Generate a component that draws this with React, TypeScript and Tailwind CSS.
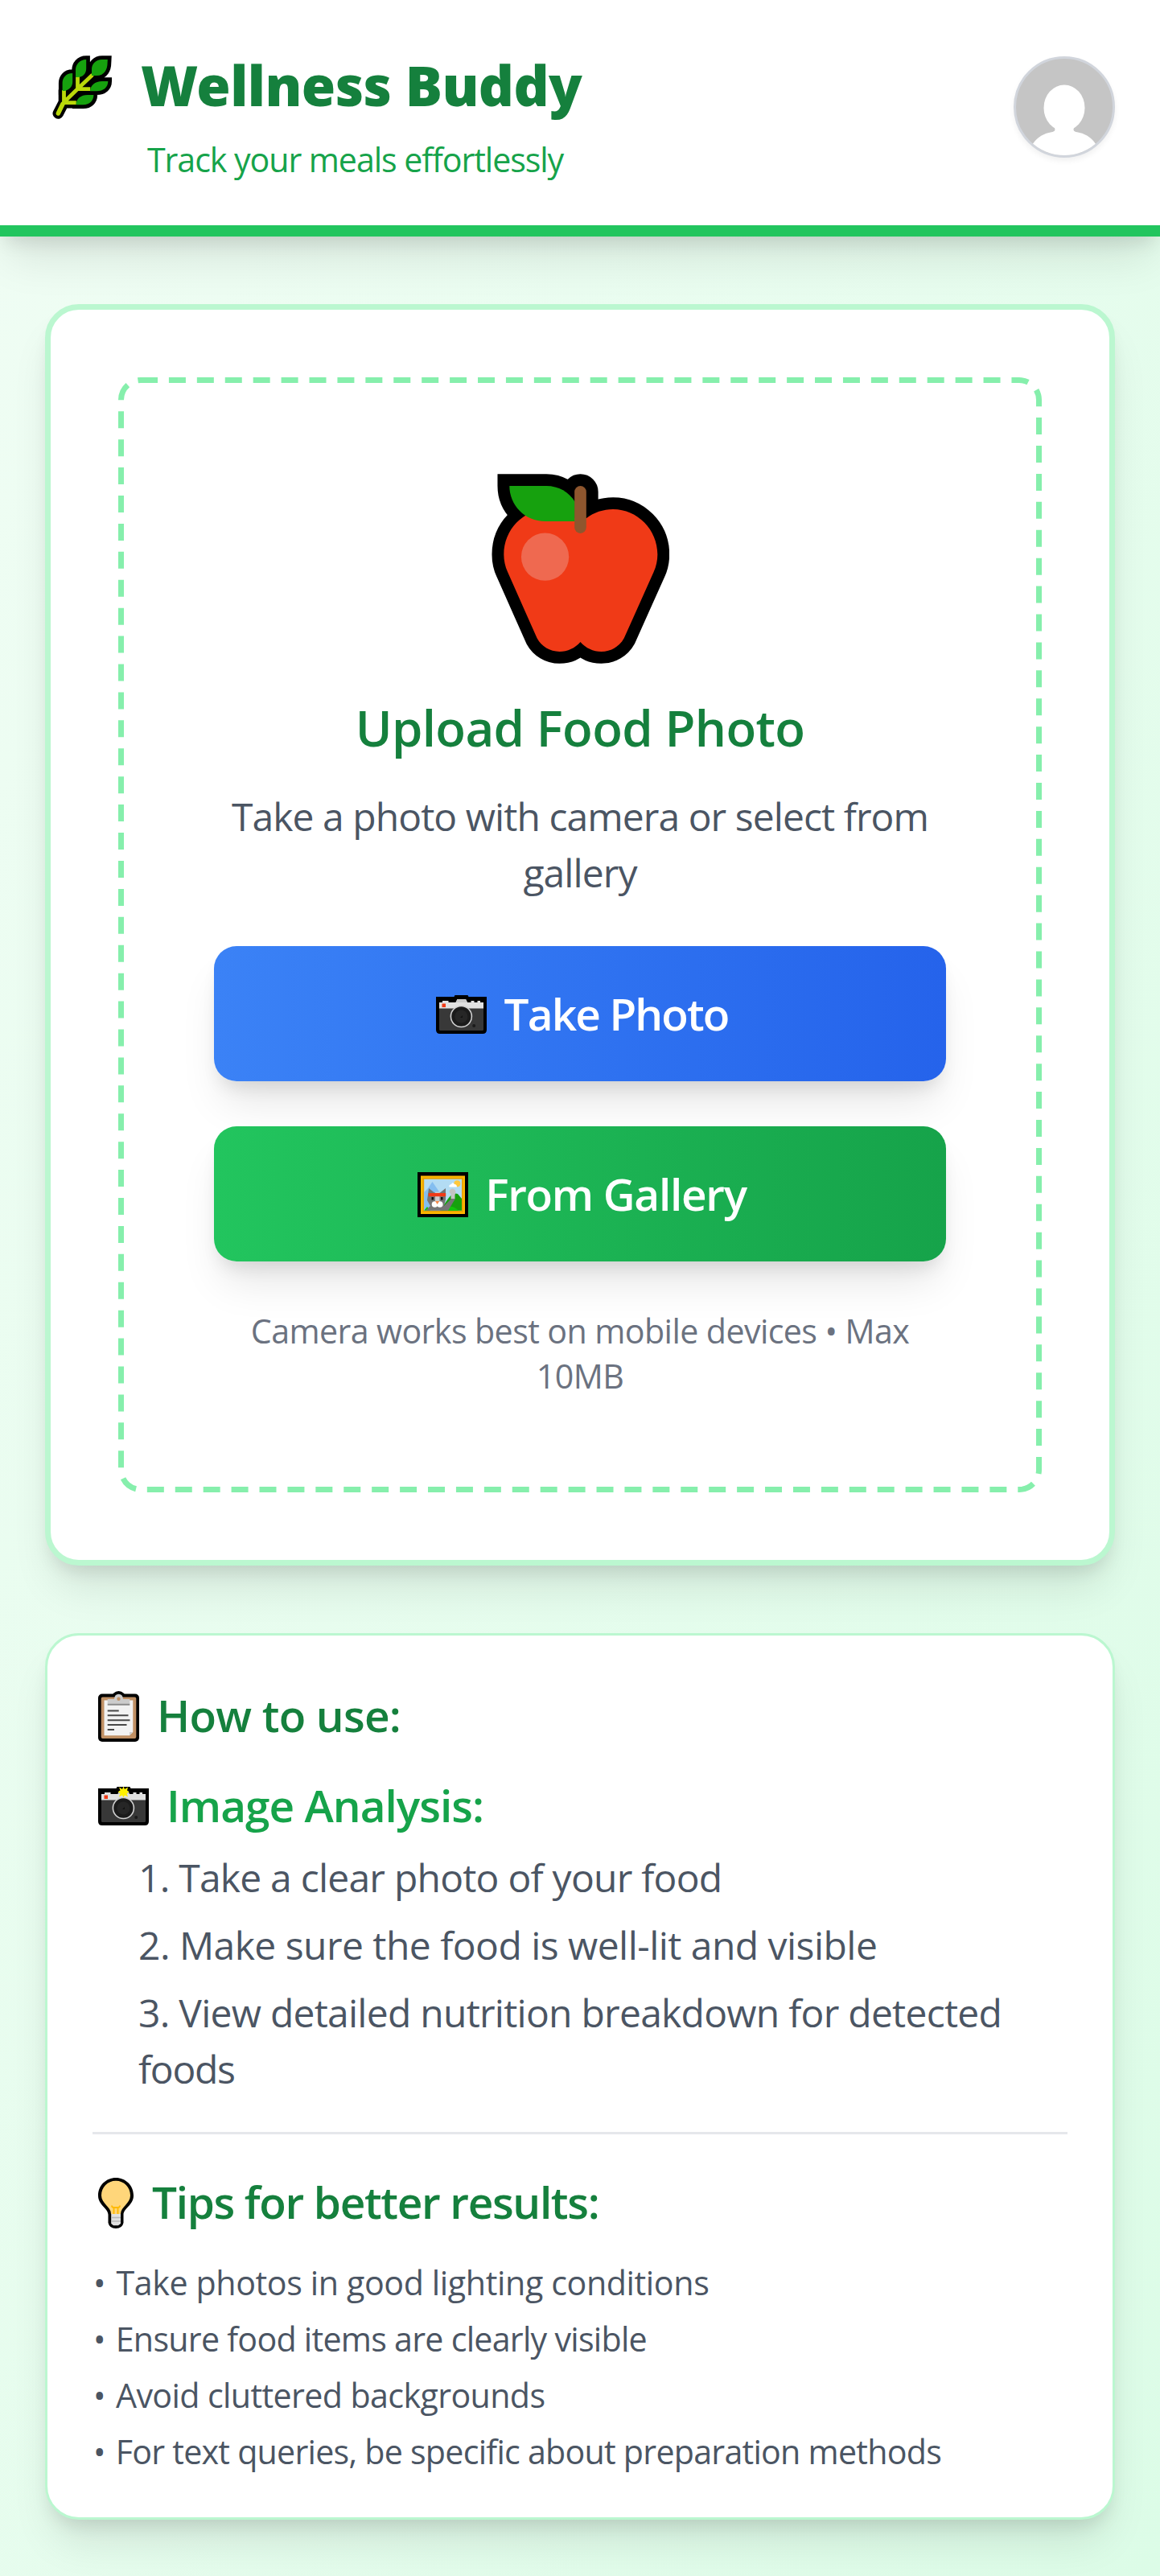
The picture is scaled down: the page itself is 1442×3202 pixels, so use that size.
import type { ReactNode } from 'react';

function LeafIcon() {
  const leaves =
    'M68.8 5H62C53.8 5 49 11 49 17V25H55C65 25 68.6 17 68.6 9ZM42.2 5C33.4 5 29 12 29 17.7V27L34.4 26.7C39.7 25.3 42.2 21 42.2 16ZM25.2 22C16.5 22 12.6 28.3 12.6 34.3V44L16 44C22.3 41.7 25.2 37.7 25.2 32.7ZM69.3 32H62C52.8 32 47.5 37 47 44.3H54.8C64 44.3 69.3 39.3 69.3 32ZM51.4 49H44C35.4 49 29.6 53.7 29.6 61.3H38.3C46.5 61.3 51.4 56 51.4 49Z';
  const stems = 'M7.3 72L14.5 58L32 41L50 24M31.5 26V41M32 41.7H47.3M14.5 43V58M15 58.7H29.8';
  return (
    <svg viewBox="0 0 74 79" className="mt-3 h-[79px] w-[74px] shrink-0">
      <path d={leaves} fill="#000" stroke="#000" strokeWidth="9.4" />
      <path d={stems} fill="none" stroke="#000" strokeWidth="13.6" strokeLinecap="round" strokeLinejoin="round" />
      <path d={stems} fill="none" stroke="#bad80a" strokeWidth="4.8" strokeLinejoin="round" />
      <path d="M7.3 72L13 60" stroke="#bad80a" strokeWidth="5.4" strokeLinecap="round" />
      <path d={leaves} fill="#16a10e" />
    </svg>
  );
}

function AppleIcon() {
  const body =
    'M332 628C352 651 380 664 410 664C446 664 478 645 495 614L606 366C615 347 620 322 620 301C620 208 545 132 454 132C418 132 382 144 355 165H310C285 144 246 132 210 132C119 132 46 208 46 301C46 322 51 347 60 366L170 614C187 645 218 664 254 664C284 664 312 651 332 628Z';
  const leaf = 'M67 45H205C250 45 290 68 312 105V177H200C125 177 67 118 67 45Z';
  return (
    <svg viewBox="0 0 664 709" className="mx-auto mt-px h-[236px] w-[221px]">
      <g fill="#000" stroke="#000" strokeWidth="89">
        <path d={body} strokeLinejoin="round" />
        <path d={leaf} />
        <rect x="310" y="45" width="44" height="177" rx="22" />
      </g>
      <path d={body} fill="#f03a17" />
      <path d={leaf} fill="#16a10e" />
      <rect x="310" y="45" width="44" height="177" rx="22" fill="#8e562e" />
      <circle cx="200" cy="310" r="89" fill="#ef6950" />
    </svg>
  );
}

function CameraIcon({ flash = false, className }: { flash?: boolean; className: string }) {
  return (
    <svg viewBox="0 0 63 48" className={className}>
      <path d="M0 2H22.5L23.5 0H39.5L40.5 2H63V43Q63 48 58 48H5Q0 48 0 43Z" fill="#000" />
      <path d="M4 16H59V42.5Q59 44 57.5 44H5.5Q4 44 4 42.5Z" fill="#383838" />
      <path d="M4 9H8V7H15.5V9H24.5L26.5 5H37L39 9H43.5V7H47.5V9H51.5V7H55V9H59V16.5H4Z" fill="#e1e1e1" />
      <path d="M24.5 9L26.5 5H37L39 9Z" fill="#ccc" />
      <rect x="7.5" y="10.5" width="4.5" height="4.5" fill="#f03a17" />
      <circle cx="31.4" cy="26.5" r="13" fill="#1b1b1b" stroke="#d2d2d2" strokeWidth="1.6" />
      <circle cx="31.4" cy="26.5" r="8" fill="#262626" />
      <path d="M30 28L33 25V28Z" fill="#111" />
      <circle cx="47.2" cy="38" r="2" fill="#1b1b1b" />
      {flash && (
        <path
          d="M31.5 -.5L33 3L37 .5L36 4.5L38.5 6.5L35.5 8L37 12.5L33 10.5L31.5 13.5L30 10.5L26 12.5L27.5 8L24.5 6.5L27.5 4.5L26 .5L30 3Z"
          fill="#fff100"
        />
      )}
    </svg>
  );
}

function PictureIcon() {
  return (
    <svg viewBox="0 0 63 56" className="mt-px h-14 w-[63px] shrink-0">
      <rect width="63" height="56" fill="#000" />
      <rect x="4" y="4.5" width="55" height="47.5" fill="#ffb900" />
      <rect x="6.2" y="6.7" width="50.6" height="43" fill="#eaa300" />
      <rect x="8.2" y="8.7" width="46.8" height="39" fill="#b3dcf3" />
      <path d="M8.2 25L13 20L18.5 12L24 20L32 32V47.7H8.2Z" fill="#84bef0" />
      <circle cx="49.3" cy="14.3" r="4" fill="#ffc83d" />
      <path d="M39.5 18.5Q38.5 15.5 42 15Q43.5 11.5 46 15Q49 15 49 18.5Z" fill="#fff" />
      <path d="M28 47.7L38 33Q44 24.5 50 27L55 33V47.7Z" fill="#16a10e" />
      <path d="M30 47.7Q41 38 51 47.7Z" fill="#13c40a" />
      <path d="M8.2 47.7L12 43L16 47.7Z" fill="#13c40a" />
      <path d="M10 47.7L16 42L12 35L14 20L21 25.5H28L35 20V34L33 42L42 33H47L38 47.7Z" fill="#757575" />
      <path d="M41.5 33V27Q38.5 25 40 22.5Q43 19 46.5 22Q48.5 25 46.5 28V33Z" fill="#c4c4c4" />
      <path d="M22 24.5H27.5V38H22Z" fill="#ccc" />
      <rect x="13.7" y="26" width="21.5" height="4.2" fill="#f03a17" />
      <path d="M17.5 31H20V34.5H17.5ZM29 31H31.5V34.5H29Z" fill="#111" />
      <circle cx="21.5" cy="40" r="3.8" fill="#fff" />
      <circle cx="27.8" cy="40" r="3.8" fill="#fff" />
      <path d="M22 36H27.2L24.6 40Z" fill="#f7894a" />
    </svg>
  );
}

function ClipboardIcon() {
  return (
    <svg viewBox="0 0 51 63" className="mt-3 h-[63px] w-[51px] shrink-0">
      <rect y="3.5" width="51" height="59.5" rx="5" fill="#000" />
      <circle cx="25.5" cy="9" r="9" fill="#000" />
      <rect x="3.7" y="7.5" width="43.6" height="51.5" rx="2" fill="#c09064" />
      <path d="M7.5 11.5H43.3V51L39 55.3H7.5Z" fill="#f2f2f2" />
      <path d="M39 55.3V51H43.3Z" fill="#ccc" />
      <path d="M11.7 10H20Q20.5 3.7 25.5 3.7T31 10H39.3V16.5H11.7Z" fill="#ccc" />
      <circle cx="25.5" cy="9.7" r="2.2" fill="#c09064" />
      <path d="M11.7 16.8H39.3" stroke="#8c8c8c" strokeWidth="2" />
      <path d="M11.7 24.5H25.7M11.7 30.3H37.5M11.7 36.3H39.5M11.7 42H35.5M11.7 48H20" stroke="#484848" strokeWidth="2" />
    </svg>
  );
}

function BulbIcon() {
  return (
    <svg viewBox="0 0 44 63" className="mt-3 h-[63px] w-11 shrink-0">
      <path d="M22 0C34 0 44 9.5 44 22C44 34 31.5 38 31.5 46V56Q30 63 22 63T12.5 56V46C12.5 38 0 34 0 22C0 9.500 10 0 22 0Z" fill="#000" />
      <path d="M22 3.7C32 3.7 40 11.5 40 22C40 32 28 36 28 45H16C16 36 4 32 4 22C4 11.5 12 3.7 22 3.7Z" fill="#ffd67a" />
      <path d="M19.5 45V37M24.5 45V37M17 34.5Q17 37 19.5 37H24.5Q27 37 27 34.5" fill="none" stroke="#ffb900" strokeWidth="1.8" />
      <path d="M16.2 45H28V57L25 59.3H19L16.2 57Z" fill="#e1e1e1" />
      <path d="M16.2 49.5H28M16.2 54H28" stroke="#b8b8b8" strokeWidth="1.5" />
    </svg>
  );
}

function Avatar() {
  return (
    <div className="mt-[13px] h-[126px] w-[126px] overflow-hidden rounded-full border-3 border-gray-300 bg-[#c5c5c5] shadow-[0_4px_7px_rgba(0,0,0,0.06)]">
      <svg viewBox="3 3 120 120" className="size-full">
        <ellipse cx="63" cy="64" rx="25.5" ry="28.5" fill="#fff" />
        <path d="M18 123C23 103 36 96 47 94.3C52 93.5 53 91 49 86H77C73 91 74 93.5 79 94.3C90 96 103 103 108 123Z" fill="#fff" />
      </svg>
    </div>
  );
}

/* Long-dash rounded outline of the drop zone */
function DashedOutline() {
  return (
    <svg className="pointer-events-none absolute inset-0" width="1148" height="1386" viewBox="0 0 1148 1386" fill="none">
      <rect x="3.5" y="3.5" width="1141" height="1379" rx="24.5" stroke="#86efac" strokeWidth="7" strokeDasharray="21 13.918" />
    </svg>
  );
}

function UploadButton({ className, children }: { className: string; children: ReactNode }) {
  return (
    <button
      className={`flex h-42 w-full items-center justify-center rounded-[28px] pl-[5px] text-[54.9px] font-semibold text-white shadow-[0_35px_52px_-10px_rgba(0,0,0,0.1),0_14px_21px_-7px_rgba(0,0,0,0.1)] ${className}`}
    >
      {children}
    </button>
  );
}

function Tip({ className, children }: { className: string; children: ReactNode }) {
  return (
    <li className={className}>
      <span className="mr-[3px]">•</span> {children}
    </li>
  );
}

export default function App() {
  return (
    <div className="min-h-[3202px] w-full bg-linear-to-br from-[#f0fdf4] to-[#dcfce7] font-['Open_Sans',sans-serif] whitespace-nowrap text-[#4b5563]">
      <header className="flex h-[294px] items-start justify-between border-b-14 border-[#22c55e] bg-white px-14 pt-[57px] shadow-[0_35px_52px_-10px_rgba(0,0,0,0.1),0_14px_21px_-7px_rgba(0,0,0,0.1)]">
        <div>
          <div className="ml-[9px] flex gap-9">
            <LeafIcon />
            <h1 className="font-['Noto_Sans',sans-serif] text-[68.6px] leading-[98px] font-black tracking-[-0.55px] text-[#15803d]">
              Wellness Buddy
            </h1>
          </div>
          <p className="mt-[15px] pl-[127px] text-[41.2px] leading-14 tracking-[-1.08px] text-[#16a34a]">
            Track your meals effortlessly
          </p>
        </div>
        <Avatar />
      </header>

      <main className="px-14 pt-21">
        <section className="h-[1568px] rounded-[42px] border-7 border-[#bbf7d0] bg-white p-21 shadow-[0_35px_52px_-10px_rgba(0,0,0,0.1),0_14px_21px_-7px_rgba(0,0,0,0.1)]">
          <div className="relative h-full p-[119px] text-center">
            <DashedOutline />
            <AppleIcon />
            <h2 className="mt-[30px] text-[61.8px] leading-[98px] font-semibold tracking-[-0.65px] text-[#15803d]">
              Upload Food Photo
            </h2>
            <p className="mt-[27px] text-[48px] leading-[70px] tracking-[-0.94px]">
              Take a photo with camera or select from
              <br />
              gallery
            </p>
            <div className="mt-14 flex flex-col gap-14">
              <UploadButton className="gap-[22px] bg-linear-to-r from-[#3b82f6] to-[#2563eb] tracking-[-1.87px]">
                <CameraIcon className="mt-0.5 h-12 w-[63px] shrink-0" />
                <span>Take Photo</span>
              </UploadButton>
              <UploadButton className="gap-[21px] bg-linear-to-r from-[#22c55e] to-[#16a34a] tracking-[-1.29px]">
                <PictureIcon />
                <span>From Gallery</span>
              </UploadButton>
            </div>
            <p className="mt-[58px] text-[41.2px] leading-14 tracking-[-0.6px] text-[#6b7280]">
              Camera works best on mobile devices • Max
              <br />
              10MB
            </p>
          </div>
        </section>

        <section className="mt-21 h-[1102px] rounded-[42px] border-3 border-[#bbf7d0] bg-white px-14 pt-[57px] shadow-[0_35px_52px_-10px_rgba(0,0,0,0.1),0_14px_21px_-7px_rgba(0,0,0,0.1)]">
          <div className="ml-[7px] flex gap-[22px]">
            <ClipboardIcon />
            <h3 className="text-[54.9px] leading-21 font-semibold tracking-[-0.77px] text-[#15803d]">How to use:</h3>
          </div>
          <div className="mt-7 ml-[7px] flex gap-[22px]">
            <CameraIcon flash className="mt-[19px] h-12 w-[63px] shrink-0 overflow-visible" />
            <h4 className="text-[54.9px] leading-21 font-semibold tracking-[-0.97px] text-[#16a34a]">Image Analysis:</h4>
          </div>
          <ol className="mt-[13px] flex flex-col gap-3.5 pl-[57px] text-[48px] leading-[70px]">
            <li className="tracking-[-0.77px]">1. Take a clear photo of your food</li>
            <li className="tracking-[-0.54px]">2. Make sure the food is well-lit and visible</li>
            <li className="tracking-[-0.75px]">
              3. View detailed nutrition breakdown for detected
              <br />
              <span className="tracking-[-1.3px]">foods</span>
            </li>
          </ol>
          <hr className="mt-[43px] border-t-3 border-gray-200" />
          <div className="mt-[42px] ml-[7px] flex gap-[23px]">
            <BulbIcon />
            <h3 className="text-[54.9px] leading-21 font-semibold tracking-[-1.33px] text-[#15803d]">
              Tips for better results:
            </h3>
          </div>
          <ul className="mt-[30px] flex flex-col gap-3.5 pl-px text-[41.2px] leading-14">
            <Tip className="tracking-[-0.39px]">Take photos in good lighting conditions</Tip>
            <Tip className="tracking-[-0.74px]">Ensure food items are clearly visible</Tip>
            <Tip className="tracking-[-0.62px]">Avoid cluttered backgrounds</Tip>
            <Tip className="tracking-[-0.76px]">For text queries, be specific about preparation methods</Tip>
          </ul>
        </section>
      </main>
    </div>
  );
}
